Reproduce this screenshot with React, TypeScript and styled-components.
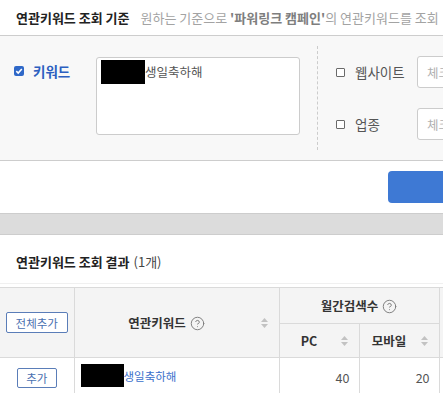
import * as React from 'react'
import styled, { createGlobalStyle } from 'styled-components'
import { CircleHelp } from 'lucide-react'

const GlobalStyle = createGlobalStyle`
  * {
    box-sizing: border-box;
  }

  body {
    margin: 0;
    overflow: hidden;
    background: #ffffff;
  }
`

const Page = styled.div`
  width: 640px;
  font-family: 'Noto Sans CJK KR', 'Noto Sans', sans-serif;
  color: #333333;
`

const TopBar = styled.div`
  height: 36px;
  display: flex;
  align-items: center;
  padding-left: 16px;
  border-bottom: 1px solid #cdcdcd;
  white-space: nowrap;
`

const SectionTitle = styled.h2`
  margin: 0;
  font-size: 13px;
  font-weight: 700;
  line-height: 16px;
  color: #222222;
`

const Desc = styled.span`
  margin-left: 11px;
  font-size: 13px;
  color: #a3a3a3;

  b {
    color: #7e7e7e;
  }
`

const FilterPanel = styled.div`
  display: flex;
  height: 125px;
  padding: 0 0 0 14px;
  background: #f8f8f8;
  border-bottom: 1px solid #cdcdcd;
`

const KeywordField = styled.div`
  display: flex;
  align-items: flex-start;
  padding-top: 10px;
`

const CheckLabel = styled.label`
  display: flex;
  align-items: center;
  gap: 9px;
  width: 82px;
  margin-top: 18px;
  font-size: 13.5px;
  line-height: 14px;
  font-weight: 700;
  color: #2c5fc0;
`

const Checked = styled.span`
  display: inline-flex;
  align-items: center;
  justify-content: center;
  width: 10px;
  height: 10px;
  border-radius: 2px;
  background: #2f68c8;
`

const Unchecked = styled.span`
  display: inline-block;
  width: 9px;
  height: 9px;
  border: 1px solid #6a6a6a;
  border-radius: 1px;
  background: #ffffff;
`

const KeywordBox = styled.div`
  width: 204px;
  height: 78px;
  margin-top: 11px;
  padding: 2px 4px;
  background: #ffffff;
  border: 1px solid #cccccc;
  border-radius: 3px;
  font-size: 12.5px;
  color: #555555;
  display: flex;
  align-items: flex-start;
`

const Redacted = styled.span<{ $w: number; $h: number }>`
  display: inline-block;
  width: ${({ $w }) => $w}px;
  height: ${({ $h }) => $h}px;
  background: #000000;
  flex-shrink: 0;
`

const BoxText = styled.span`
  line-height: 24px;
`

const Options = styled.div`
  display: flex;
  flex-direction: column;
  gap: 20px;
  margin: 10px 0 10px 17px;
  padding: 10px 0 10px 18px;
  border-left: 1px dashed #cccccc;
`

const OptionRow = styled.div`
  display: flex;
  align-items: center;
  height: 32px;
`

const OptionLabel = styled.span`
  width: 62px;
  margin-left: 10px;
  font-size: 13.5px;
  color: #555555;
`

const OptionInput = styled.div`
  width: 160px;
  height: 32px;
  padding-left: 9px;
  display: flex;
  align-items: center;
  overflow: hidden;
  white-space: nowrap;
  background: #ffffff;
  border: 1px solid #cccccc;
  border-radius: 3px;
  font-size: 12.5px;
  color: #b0b0b0;
`

const ActionBar = styled.div`
  height: 53px;
  padding: 10px 0 0 388px;
  border-bottom: 1px solid #cdcdcd;
`

const PrimaryButton = styled.button`
  width: 140px;
  height: 32px;
  border: none;
  border-radius: 4px;
  background: #3e79d4;
`

const Band = styled.div`
  height: 21px;
  background: #dcdcdc;
  border-bottom: 1px solid #cdcdcd;
`

const ResultHead = styled.div`
  height: 49px;
  padding: 19px 0 0 16px;
  border-bottom: 1px solid #f0f0f0;
  display: flex;
  align-items: flex-start;
`

const Count = styled.span`
  margin-left: 4px;
  font-size: 13px;
  line-height: 16px;
  color: #444444;
`

const Table = styled.table`
  margin-top: 3px;
  width: 640px;
  table-layout: fixed;
  border-collapse: collapse;
  border-top: 1px solid #c8c8c8;
`

const Th = styled.th<{ $h?: number; $sortable?: boolean }>`
  position: relative;
  height: ${({ $h = 34 }) => $h}px;
  padding: 0 ${({ $sortable }) => ($sortable ? 20 : 0)}px 0 0;
  background: #f4f4f4;
  border: 1px solid #dadada;
  font-size: 12.5px;
  font-weight: 700;
  color: #333333;
  text-align: center;
  vertical-align: middle;

  &:first-child {
    border-left: none;
  }
`

const Td = styled.td<{ $align?: 'left' | 'center' | 'right' }>`
  height: 40px;
  padding: 0 ${({ $align }) => ($align === 'right' ? 9 : 0)}px 0
    ${({ $align }) => ($align === 'left' ? 6 : 0)}px;
  border: 1px solid #dadada;
  font-size: 12.5px;
  color: #555555;
  text-align: ${({ $align = 'center' }) => $align};
  vertical-align: middle;

  &:first-child {
    border-left: none;
  }
`

const SmallButton = styled.button<{ $w: number; $h: number }>`
  width: ${({ $w }) => $w}px;
  height: ${({ $h }) => $h}px;
  padding: 0;
  background: #ffffff;
  border: 1px solid #5a7db8;
  border-radius: 2px;
  font-family: inherit;
  font-size: 11.5px;
  color: #4a70b0;
`

const KeywordLink = styled.a`
  display: inline-flex;
  align-items: center;
  font-size: 11.5px;
  color: #3a6fcb;
  text-decoration: none;
`

const SortWrap = styled.span`
  position: absolute;
  right: 11px;
  top: 50%;
  margin-top: -5px;
  display: flex;
`

const HelpWrap = styled.span`
  display: inline-flex;
  margin-left: 4px;
  vertical-align: -3px;
  color: #7a7a7a;
`

const SortIcon = () => (
  <SortWrap>
    <svg width='7' height='10' viewBox='0 0 7 10'>
      <polygon points='3.5,0 7,4 0,4' fill='#c2c2c2' />
      <polygon points='0,6 7,6 3.5,10' fill='#c2c2c2' />
    </svg>
  </SortWrap>
)

const Help = () => (
  <HelpWrap>
    <CircleHelp size={15} strokeWidth={1.5} />
  </HelpWrap>
)

const CheckMark = () => (
  <svg width='8' height='8' viewBox='0 0 8 8'>
    <path d='M1.3 4.2 L3.2 6 L6.8 2' stroke='#ffffff' strokeWidth='1.6' fill='none' />
  </svg>
)

export default function App() {
  return (
    <Page>
      <GlobalStyle />
      {/* Search criteria */}
      <TopBar>
        <SectionTitle>연관키워드 조회 기준</SectionTitle>
        <Desc>
          원하는 기준으로 <b>'파워링크 캠페인'</b>의 연관키워드를 조회
        </Desc>
      </TopBar>
      <FilterPanel>
        <KeywordField>
          <CheckLabel>
            <Checked>
              <CheckMark />
            </Checked>
            키워드
          </CheckLabel>
          <KeywordBox>
            <Redacted $w={44} $h={24} />
            <BoxText>생일축하해</BoxText>
          </KeywordBox>
        </KeywordField>
        <Options>
          <OptionRow>
            <Unchecked />
            <OptionLabel>웹사이트</OptionLabel>
            <OptionInput>체크</OptionInput>
          </OptionRow>
          <OptionRow>
            <Unchecked />
            <OptionLabel>업종</OptionLabel>
            <OptionInput>체크</OptionInput>
          </OptionRow>
        </Options>
      </FilterPanel>
      <ActionBar>
        <PrimaryButton aria-label='조회하기' />
      </ActionBar>
      <Band />

      {/* Results */}
      <ResultHead>
        <SectionTitle>연관키워드 조회 결과</SectionTitle>
        <Count>(1개)</Count>
      </ResultHead>
      <Table>
        <colgroup>
          <col style={{ width: 74 }} />
          <col style={{ width: 205 }} />
          <col style={{ width: 80 }} />
          <col style={{ width: 80 }} />
          <col />
        </colgroup>
        <thead>
          <tr>
            <Th rowSpan={2} $h={36}>
              <SmallButton $w={62} $h={21}>
                전체추가
              </SmallButton>
            </Th>
            <Th rowSpan={2} $sortable>
              연관키워드
              <Help />
              <SortIcon />
            </Th>
            <Th colSpan={2} $h={36}>
              월간검색수
              <Help />
            </Th>
            <Th rowSpan={2} />
          </tr>
          <tr>
            <Th $sortable>
              PC
              <SortIcon />
            </Th>
            <Th $sortable>
              모바일
              <SortIcon />
            </Th>
          </tr>
        </thead>
        <tbody>
          <tr>
            <Td>
              <SmallButton $w={40} $h={20}>
                추가
              </SmallButton>
            </Td>
            <Td $align='left'>
              <KeywordLink href='#'>
                <Redacted $w={43} $h={23} />
                생일축하해
              </KeywordLink>
            </Td>
            <Td $align='right'>40</Td>
            <Td $align='right'>20</Td>
            <Td />
          </tr>
        </tbody>
      </Table>
    </Page>
  )
}
